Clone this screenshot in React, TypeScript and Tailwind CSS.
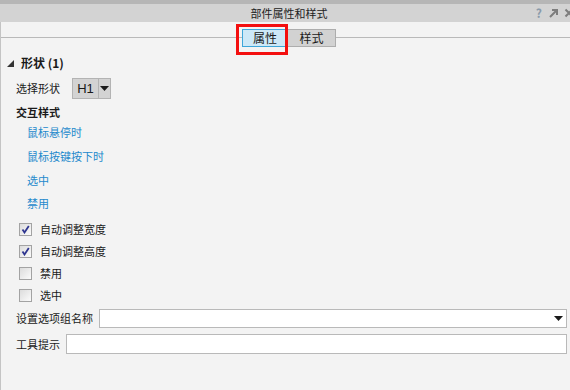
import React from 'react';

const font = { fontFamily: '"Noto Sans CJK SC", "Noto Sans", sans-serif' };

function Check({ checked }: { checked?: boolean }) {
  return (
    <span className="w-[13px] h-[13px] shrink-0 border border-[#a3a3a3] bg-gradient-to-br from-[#dcdcdc] to-[#fbfbfb] flex items-center justify-center">
      {checked && (
        <svg width="9" height="9" viewBox="0 0 9 9">
          <path d="M1.5 4.5 L3.5 7.5 L7.8 1" fill="none" stroke="#2f3690" strokeWidth="1.8" />
        </svg>
      )}
    </span>
  );
}

function Caret() {
  return (
    <svg width="9" height="5" viewBox="0 0 9 5">
      <path d="M0 0 H9 L4.5 5 Z" fill="#1a1a1a" />
    </svg>
  );
}

export default function App() {
  const links = [
    { label: '鼠标悬停时', h: 'h-[20px] mt-0' },
    { label: '鼠标按键按下时', h: 'h-[20px] mt-[4px]' },
    { label: '选中', h: 'h-[20px] mt-[4px]' },
    { label: '禁用', h: 'h-[20px] mt-[3px]' },
  ];
  const checks = [
    { label: '自动调整宽度', checked: true },
    { label: '自动调整高度', checked: true },
    { label: '禁用', checked: false },
    { label: '选中', checked: false },
  ];

  return (
    <div style={font} className="w-[570px] h-[390px] bg-[#f3f3f3] overflow-hidden flex flex-col text-[11px] text-[#1a1a1a] whitespace-nowrap">
      <div className="h-[4px] bg-[#b6b6b6]" />
      <div className="h-[18px] bg-[#d3d3d3] relative flex items-center justify-center pl-[8px]">
        <span className="text-[11px] text-[#222] leading-none">部件属性和样式</span>
        <div className="absolute right-[-4px] top-0 h-full flex items-center gap-[6px] text-[#888]">
          <span className="text-[12px] font-bold text-[#8a9aaa] leading-none">?</span>
          <svg width="10" height="10" viewBox="0 0 10 10">
            <path d="M2 9 L8 3 M4 2 H9 V7" fill="none" stroke="#7d7d7d" strokeWidth="2" />
          </svg>
          <svg width="10" height="10" viewBox="0 0 10 10">
            <path d="M1.5 1.5 L8.5 8.5 M8.5 1.5 L1.5 8.5" fill="none" stroke="#7d7d7d" strokeWidth="2" />
          </svg>
        </div>
      </div>

      <div className="flex-1 flex flex-col border-l border-[#c4c4c4]">
        <div className="relative h-[32px]">
          <div className="absolute left-0 right-0 top-[15px] h-px bg-[#b9b9b9]" />
          <div className="relative flex pl-[241px] pt-[7px]">
            <div className="w-[46px] h-[18px] bg-[#cde8f7] border border-[#3ea6d9] flex items-center justify-center leading-none text-[12px]">属性</div>
            <div className="w-[48px] h-[18px] bg-[#d2d2d2] border border-[#adadad] border-l-0 flex items-center justify-center leading-none text-[12px]">样式</div>
          </div>
          <div className="absolute left-[235px] top-[2px] w-[52px] h-[31px] border-[3px] border-[#f30f0f]" />
        </div>

        <div className="h-[18px] flex items-center pl-[6px] gap-[7px]">
          <svg width="7" height="7" viewBox="0 0 7 7">
            <path d="M7 0 V7 H0 Z" fill="#333" />
          </svg>
          <span className="font-bold text-[12px]">形状 (1)</span>
        </div>

        <div className="h-[24px] mt-[4px] flex items-center pl-[15px]">
          <span className="w-[56px] shrink-0">选择形状</span>
          <div className="h-[21px] w-[39px] flex bg-[#d3d3d3] border border-[#b3b3b3]">
            <span className="w-[25px] flex items-center justify-center text-[13px] leading-none" style={{ fontFamily: '"Liberation Sans", sans-serif' }}>H1</span>
            <span className="flex-1 border-l border-[#b3b3b3] flex items-center justify-center">
              <Caret />
            </span>
          </div>
        </div>

        <div className="h-[20px] mt-[2px] flex items-center pl-[15px] font-bold">交互样式</div>

        {links.map((l) => (
          <div key={l.label} className={`${l.h} flex items-center pl-[26px] text-[#2389cc]`}>
            {l.label}
          </div>
        ))}

        <div className="flex flex-col mt-[5px]">
          {checks.map((c) => (
            <div key={c.label} className="h-[22px] flex items-center pl-[18px] gap-[8px]">
              <Check checked={c.checked} />
              <span>{c.label}</span>
            </div>
          ))}
        </div>

        <div className="h-[19px] mt-[3px] flex items-center pl-[15px] pr-[3px]">
          <span className="w-[83px] shrink-0">设置选项组名称</span>
          <div className="flex-1 h-[19px] bg-white border border-[#b9b9b9] flex items-center justify-end pr-[3px]">
            <Caret />
          </div>
        </div>

        <div className="h-[20px] mt-[6px] flex items-center pl-[15px] pr-[3px]">
          <span className="w-[50px] shrink-0">工具提示</span>
          <div className="flex-1 h-[20px] bg-white border border-[#b9b9b9]" />
        </div>
      </div>
    </div>
  );
}
